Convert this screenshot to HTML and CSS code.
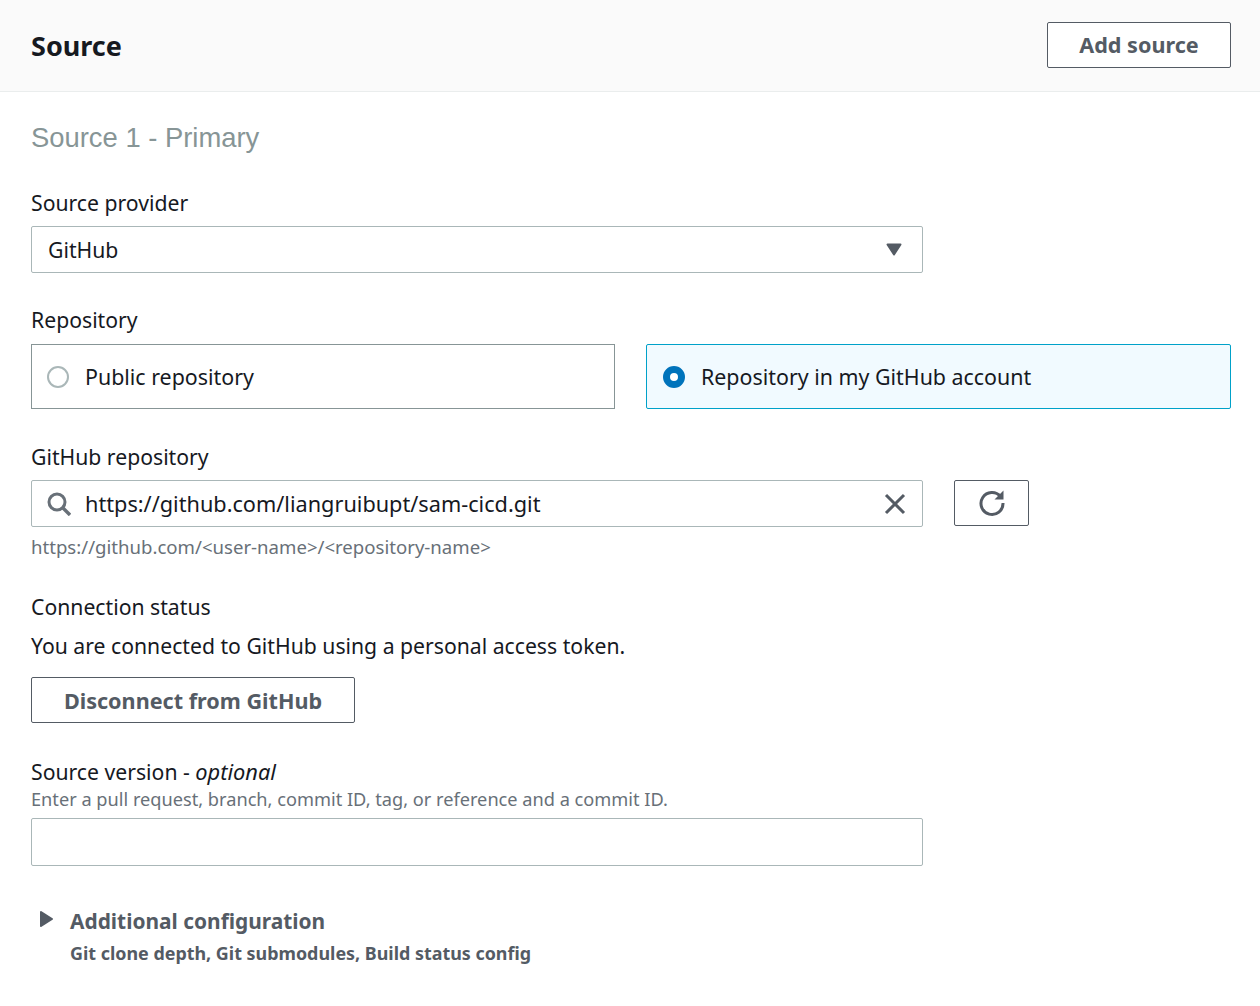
FILE: index.html
```html
<!DOCTYPE html>
<html lang="en">
<head>
  <meta charset="UTF-8">
  <title>Source</title>
  <link rel="stylesheet" href="styles.css">
</head>
<body>
  <header class="panel-header">
    <h2>Source</h2>
    <button class="btn btn-add">Add source</button>
  </header>

  <main class="panel-body">
    <h3 class="sub-title">Source 1 - Primary</h3>

    <div class="field field-provider">
      <div class="label">Source provider</div>
      <div class="control">
        <span class="control-text">GitHub</span>
        <svg class="caret" width="16" height="13" viewBox="0 0 16 13"><path d="M1.5 1.5h13L8 11.5z" fill="#545b64" stroke="#545b64" stroke-width="2" stroke-linejoin="round"/></svg>
      </div>
    </div>

    <div class="field field-repo">
      <div class="label">Repository</div>
      <div class="tiles">
        <div class="tile">
          <span class="radio"></span>
          <span>Public repository</span>
        </div>
        <div class="tile tile-selected">
          <span class="radio radio-on"></span>
          <span>Repository in my GitHub account</span>
        </div>
      </div>
    </div>

    <div class="field field-github">
      <div class="label">GitHub repository</div>
      <div class="search-row">
        <div class="control control-search">
          <svg class="search-icon" width="24" height="24" viewBox="0 0 24 24"><circle cx="10" cy="10" r="8" fill="none" stroke="#687078" stroke-width="3"/><path d="M15.5 15.5l7.5 7.5" stroke="#687078" stroke-width="3.4" fill="none"/></svg>
          <span class="control-text">https://github.com/liangruibupt/sam-cicd.git</span>
          <svg class="clear-icon" width="22" height="22" viewBox="0 0 22 22"><path d="M2 2l18 18M20 2L2 20" stroke="#545b64" stroke-width="3" fill="none"/></svg>
        </div>
        <button class="btn btn-refresh">
          <svg width="28" height="28" viewBox="0 0 28 28"><path d="M22.5 7.5A11 11 0 1 0 25 14" stroke="#545b64" stroke-width="3" fill="none"/><path d="M25.5 1.5v9h-9z" fill="#545b64"/></svg>
        </button>
      </div>
      <div class="hint">https://github.com/&lt;user-name&gt;/&lt;repository-name&gt;</div>
    </div>

    <div class="field field-status">
      <div class="label">Connection status</div>
      <p class="status-text">You are connected to GitHub using a personal access token.</p>
      <button class="btn btn-disconnect">Disconnect from GitHub</button>
    </div>

    <div class="field field-version">
      <div class="label">Source version - <em>optional</em></div>
      <div class="hint hint-desc">Enter a pull request, branch, commit ID, tag, or reference and a commit ID.</div>
      <div class="control control-empty"></div>
    </div>

    <div class="expander">
      <svg class="expander-icon" width="15" height="18" viewBox="0 0 15 18"><path d="M2 2l11 7-11 7z" fill="#545b64" stroke="#545b64" stroke-width="2" stroke-linejoin="round"/></svg>
      <div>
        <div class="expander-title">Additional configuration</div>
        <div class="expander-sub">Git clone depth, Git submodules, Build status config</div>
      </div>
    </div>
  </main>
</body>
</html>
```

FILE: styles.css
```css
* {
  box-sizing: border-box;
}

body {
  margin: 0;
  font-family: "Noto Sans", "Open Sans", sans-serif;
  font-size: 21.2px;
  color: #16191f;
  background: #fff;
}

.panel-header {
  display: flex;
  justify-content: space-between;
  align-items: center;
  height: 92px;
  padding: 0 29px 2px 31px;
  background: #fafafa;
  border-bottom: 1px solid #eaeded;
}

.panel-header h2 {
  margin: 2px 0 0;
  font-size: 27px;
  font-weight: 700;
}

.btn {
  display: flex;
  align-items: center;
  justify-content: center;
  padding: 0;
  height: 46px;
  background: #fff;
  border: 1px solid #545b64;
  border-radius: 2px;
  font-family: inherit;
  font-size: 21.6px;
  font-weight: 700;
  color: #545b64;
}

.btn-add {
  width: 184px;
  padding-bottom: 1px;
}

.panel-body {
  padding: 0 29px 0 31px;
}

.sub-title {
  margin: 0;
  padding-top: 27px;
  font-family: "Liberation Sans", sans-serif;
  font-size: 27.4px;
  line-height: 38px;
  font-weight: 400;
  color: #879596;
}

.label {
  line-height: 30px;
}

.label em {
  font-size: 21.8px;
}

.field-provider {
  margin-top: 31px;
}

.field-repo {
  margin-top: 32px;
}

.field-github {
  margin-top: 33px;
}

.field-status {
  margin-top: 30px;
}

.field-version {
  margin-top: 34px;
}

.control {
  display: flex;
  align-items: center;
  width: 892px;
  height: 47px;
  padding: 0 16px;
  border: 1px solid #aab7b8;
  border-radius: 2px;
}

.control-search {
  padding-left: 15px;
  font-size: 21.7px;
}

.control-text {
  flex: 1;
}

.caret {
  margin-right: 4px;
}

.control-empty {
  height: 48px;
  margin-top: 7px;
}

.field-provider .control,
.search-row {
  margin-top: 8px;
}

.tiles {
  display: grid;
  grid-template-columns: 584px 585px;
  gap: 31px;
  margin-top: 9px;
}

.tile {
  display: flex;
  align-items: center;
  gap: 16px;
  height: 65px;
  padding: 0 15px;
  border: 1px solid #879596;
  font-size: 21.4px;
}

.tile-selected {
  padding-left: 16px;
  background: #f1faff;
  border-color: #00a1c9;
  border-radius: 2px;
}

.radio {
  width: 22px;
  height: 22px;
  border: 2px solid #aab7b8;
  border-radius: 50%;
  background: #fff;
}

.radio-on {
  border: 7px solid #0073bb;
}

.search-row {
  display: flex;
  gap: 31px;
}

.search-icon {
  margin-right: 14px;
}

.btn-refresh {
  width: 75px;
}

.hint {
  margin-top: 5px;
  font-size: 18.6px;
  line-height: 30px;
  color: #687078;
}

.hint-desc {
  margin-top: 0;
  font-size: 18.2px;
  line-height: 24px;
}

.status-text {
  margin: 9px 0 0;
  line-height: 30px;
}

.btn-disconnect {
  width: 324px;
  margin-top: 16px;
}

.expander {
  display: flex;
  gap: 16px;
  margin: 40px 0 0 8px;
}

.expander-icon {
  margin-top: 4px;
}

.expander-title {
  font-size: 20.9px;
  font-weight: 700;
  line-height: 30px;
  color: #545b64;
}

.expander-sub {
  margin-top: 2px;
  font-size: 17.9px;
  font-weight: 700;
  line-height: 30px;
  color: #545b64;
}
```
